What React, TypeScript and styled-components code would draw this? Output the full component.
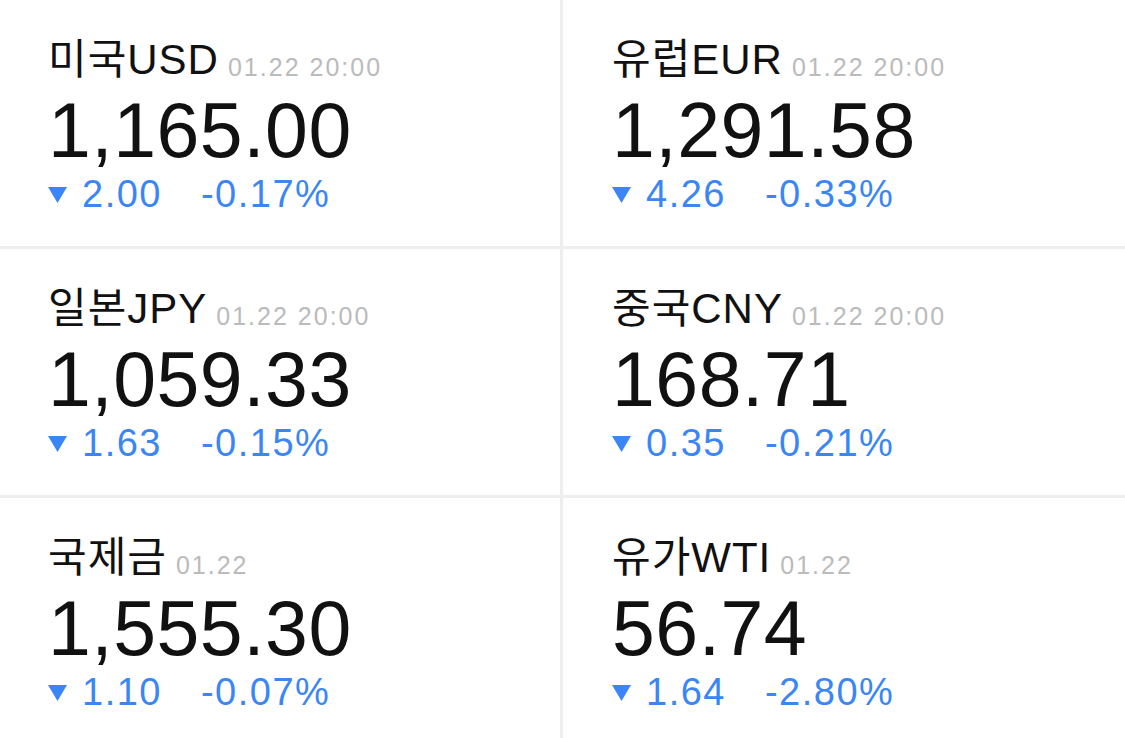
import styled, { createGlobalStyle } from "styled-components";

const GlobalStyle = createGlobalStyle`
  html, body {
    margin: 0;
    padding: 0;
    background: #ffffff;
  }
  body {
    font-family: "Liberation Sans", "Noto Sans CJK KR", sans-serif;
    overflow: hidden;
  }
`;

const Board = styled.div`
  display: grid;
  grid-template-columns: 563px 1fr;
  width: 1125px;
  height: 738px;
  overflow: hidden;
`;

const Cell = styled.div<{ $left: boolean }>`
  box-sizing: border-box;
  height: 249px;
  padding: 36px 0 0 ${(p) => (p.$left ? "48px" : "49px")};
  border-bottom: 3px solid #eeeeee;
  border-right: ${(p) => (p.$left ? "3px solid #eeeeee" : "none")};
`;

const Title = styled.div`
  display: flex;
  align-items: baseline;
  gap: 9px;
  height: 48px;
  line-height: 48px;
  font-size: 42px;
  letter-spacing: 1px;
  color: #111111;
  white-space: nowrap;
`;

const Stamp = styled.span`
  font-size: 25px;
  line-height: 25px;
  letter-spacing: 2px;
  color: #bbbbbb;
  transform: translateY(2px);
`;

const Price = styled.div`
  margin-top: 6px;
  height: 80px;
  line-height: 80px;
  font-size: 77px;
  letter-spacing: 0.5px;
  color: #111111;
`;

const Change = styled.div`
  display: flex;
  align-items: center;
  margin-top: 4px;
  height: 40px;
  line-height: 40px;
  font-size: 38px;
  letter-spacing: 1.5px;
  color: #3b86f6;
`;

const Arrow = styled.svg`
  width: 19px;
  height: 16px;
  margin: 2px 15px 0 0;
  fill: #3b86f6;
`;

const Percent = styled.span`
  margin-left: 39px;
`;

interface IQuote {
  name: string;
  time: string;
  price: string;
  diff: string;
  rate: string;
}

const quotes: IQuote[] = [
  { name: "미국USD", time: "01.22 20:00", price: "1,165.00", diff: "2.00", rate: "-0.17%" },
  { name: "유럽EUR", time: "01.22 20:00", price: "1,291.58", diff: "4.26", rate: "-0.33%" },
  { name: "일본JPY", time: "01.22 20:00", price: "1,059.33", diff: "1.63", rate: "-0.15%" },
  { name: "중국CNY", time: "01.22 20:00", price: "168.71", diff: "0.35", rate: "-0.21%" },
  { name: "국제금", time: "01.22", price: "1,555.30", diff: "1.10", rate: "-0.07%" },
  { name: "유가WTI", time: "01.22", price: "56.74", diff: "1.64", rate: "-2.80%" },
];

const App = () => {
  return (
    <>
      <GlobalStyle />
      <Board>
        {quotes.map((q, i) => (
          <Cell key={q.name} $left={i % 2 === 0}>
            <Title>
              {q.name}
              <Stamp>{q.time}</Stamp>
            </Title>
            <Price>{q.price}</Price>
            <Change>
              <Arrow viewBox="0 0 19 16">
                <path d="M0 0 H19 L9.5 16 Z" />
              </Arrow>
              {q.diff}
              <Percent>{q.rate}</Percent>
            </Change>
          </Cell>
        ))}
      </Board>
    </>
  );
};

export default App;
